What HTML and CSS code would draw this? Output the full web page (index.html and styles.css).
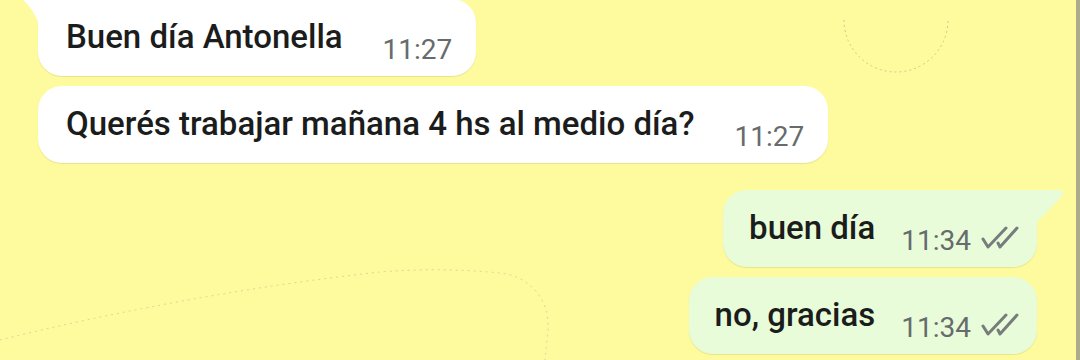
FILE: index.html
```html
<!DOCTYPE html>
<html lang="es">
<head>
  <meta charset="UTF-8" />
  <meta name="viewport" content="width=device-width, initial-scale=1.0" />
  <title>Chat</title>
  <link rel="stylesheet" href="styles.css">
</head>
<body>
  <div class="screen">
    <!-- trazos de fondo -->
    <svg class="doodle" width="1076" height="360" viewBox="0 0 1076 360">
      <path d="M844 20 A52 52 0 0 0 948 20" fill="none" stroke="#cdc98e" stroke-width="1" stroke-dasharray="2 3"/>
      <path d="M0 340 C120 310 260 285 380 272 C430 268 470 270 500 273 C530 276 550 300 548 330 L545 360" fill="none" stroke="#dcd796" stroke-width="1" stroke-dasharray="2 4"/>
    </svg>

    <div class="chat">
      <div class="msg in first">
        <svg class="tail tail-in" width="20" height="34" viewBox="0 0 20 34"><path d="M0 0 H20 V34 C16 20 10 8 0 0 Z" fill="#fff"/></svg>
        <div class="bubble">
          <span class="text">Buen día Antonella</span>
          <span class="meta">11:27</span>
        </div>
      </div>
      <div class="msg in">
        <div class="bubble">
          <span class="text">Querés trabajar mañana 4 hs al medio día?</span>
          <span class="meta">11:27</span>
        </div>
      </div>

      <div class="msg out group">
        <svg class="tail tail-out" width="32" height="36" viewBox="0 0 32 36"><path d="M0 0 H26 C30 0 31 3 29 6 C20 16 10 26 0 36 Z" fill="#e9fcd9"/></svg>
        <div class="bubble">
          <span class="text">buen día</span>
          <span class="meta">11:34
            <svg class="ticks" width="40" height="24" viewBox="0 0 40 24"><path d="M3 13 L8 21 L26 2 M18 17 L20 21 L37 2" fill="none" stroke="#767d7c" stroke-width="3" stroke-linecap="round" stroke-linejoin="round"/></svg>
          </span>
        </div>
      </div>
      <div class="msg out">
        <div class="bubble">
          <span class="text">no, gracias</span>
          <span class="meta">11:34
            <svg class="ticks" width="40" height="24" viewBox="0 0 40 24"><path d="M3 13 L8 21 L26 2 M18 17 L20 21 L37 2" fill="none" stroke="#767d7c" stroke-width="3" stroke-linecap="round" stroke-linejoin="round"/></svg>
          </span>
        </div>
      </div>
    </div>
  </div>
</body>
</html>
```

FILE: styles.css
```css
:root {
  --bg: #fefb9f;
  --in: #ffffff;
  --out: #e9fcd9;
  --ink: #1b1c1c;
  --muted: #676b6d;
  --edge: #a9ab8b;
}
* { box-sizing: border-box; margin: 0; padding: 0; }
html, body { height: 100%; }
body {
  background: var(--bg);
  font-family: Roboto, "Noto Sans", sans-serif;
  color: var(--ink);
  overflow: hidden;
}
.screen {
  position: relative;
  height: 360px;
  border-right: 4px solid var(--edge);
  overflow: hidden;
}
.doodle { position: absolute; top: 0; left: 0; }
.chat {
  position: relative;
  display: flex;
  flex-direction: column;
  gap: 10px;
  padding: 0 39px 0 38px;
}
.msg { position: relative; display: flex; }
.msg.first { margin-top: -1px; }
.msg.out { justify-content: flex-end; }
.msg.group { margin-top: 17px; }
.bubble {
  display: flex;
  align-items: flex-end;
  height: 77px;
  padding: 18px 24px 19px 28px;
  border-radius: 24px;
  background: var(--in);
  box-shadow: 0 1px 1px rgba(120,120,60,0.18);
}
.msg.in.first .bubble { border-top-left-radius: 0; }
.msg.out .bubble { background: var(--out); padding-left: 26px; padding-right: 17px; }
.msg.group .bubble { border-top-right-radius: 0; }
.text {
  font-size: 33px;
  font-weight: 500;
  line-height: 40px;
  white-space: nowrap;
}
.meta {
  display: flex;
  align-items: center;
  gap: 9px;
  margin-left: 40px;
  margin-bottom: -6px;
  font-size: 28px;
  line-height: 26px;
  color: var(--muted);
  white-space: nowrap;
}
.msg.out .meta { margin-left: 26px; }
.ticks { margin-top: -6px; }
.tail { position: absolute; top: 0; }
.tail-in { left: -16px; }
.tail-out { right: -28px; }
```
